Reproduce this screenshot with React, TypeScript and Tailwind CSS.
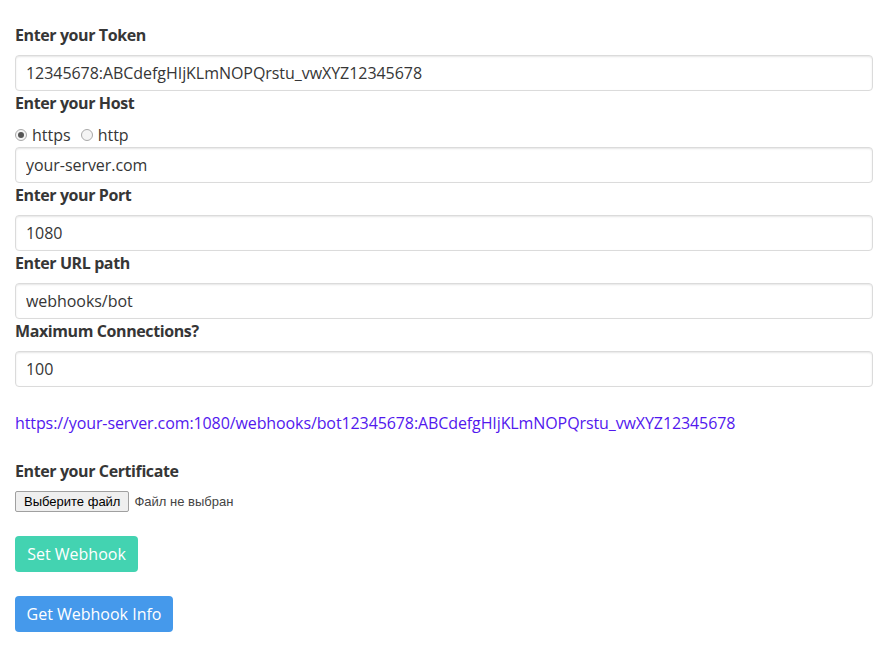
import React from 'react'

const FIELD_INPUT =
  'block w-full h-9 px-[10px] rounded-[4px] border border-[#dbdbdb] bg-white text-base text-[#363636] tracking-[-0.05px] shadow-[inset_0_1px_2px_rgba(10,10,10,0.1)] outline-none'

const LABEL = 'block text-base leading-6 font-bold tracking-[-0.4px] text-[#363636] mb-2'

function Field({ label, value }: { label: string; value: string }) {
  return (
    <div>
      <label className={LABEL}>{label}</label>
      <input className={FIELD_INPUT} defaultValue={value} readOnly />
    </div>
  )
}

function Radio({ checked, label }: { checked?: boolean; label: string }) {
  return (
    <label className="flex items-center gap-[5px]">
      <span className="flex items-center justify-center w-[12px] h-[12px] rounded-full border border-[#a9a9a9] bg-[#f4f4f4]">
        {checked && <span className="w-[6px] h-[6px] rounded-full bg-[#555]" />}
      </span>
      <span className="text-base text-[#363636]">{label}</span>
    </label>
  )
}

export default function App() {
  const token = '12345678:ABCdefgHIjKLmNOPQrstu_vwXYZ12345678'
  const url = `https://your-server.com:1080/webhooks/bot${token}`

  return (
    <div
      className="min-h-screen bg-white px-[15px] pt-[23px] pr-[18px]"
      style={{ fontFamily: '"Open Sans", "Noto Sans", sans-serif' }}
    >
      <Field label="Enter your Token" value={token} />

      <div>
        <label className={LABEL}>Enter your Host</label>
        <div className="flex items-center gap-[10px] h-6">
          <Radio checked label="https" />
          <Radio label="http" />
        </div>
        <input className={FIELD_INPUT} defaultValue="your-server.com" readOnly />
      </div>

      <Field label="Enter your Port" value="1080" />
      <Field label="Enter URL path" value="webhooks/bot" />
      <Field label="Maximum Connections?" value="100" />

      <a href="#" className="block mt-6 text-base leading-6 tracking-[-0.1px] text-[#5218ee]">
        {url}
      </a>

      <label className="block mt-6 mb-2 text-base leading-6 font-bold tracking-[-0.4px] text-[#363636]">
        Enter your Certificate
      </label>
      <div className="flex items-center gap-[5px]" style={{ fontFamily: '"Liberation Sans", Arial, sans-serif' }}>
        <button className="h-[21px] px-[8px] rounded-[2px] border border-[#a0a0a0] bg-[#efefef] text-[13px] text-black">
          Выберите файл
        </button>
        <span className="text-[13px] text-[#444]">Файл не выбран</span>
      </div>

      <div className="mt-6 flex flex-col items-start gap-6">
        <button className="h-9 w-[123px] rounded-[4px] bg-[#43d3b1] text-base text-white">
          Set Webhook
        </button>
        <button className="h-9 w-[158px] rounded-[4px] bg-[#4599eb] text-base text-white">
          Get Webhook Info
        </button>
      </div>
    </div>
  )
}
